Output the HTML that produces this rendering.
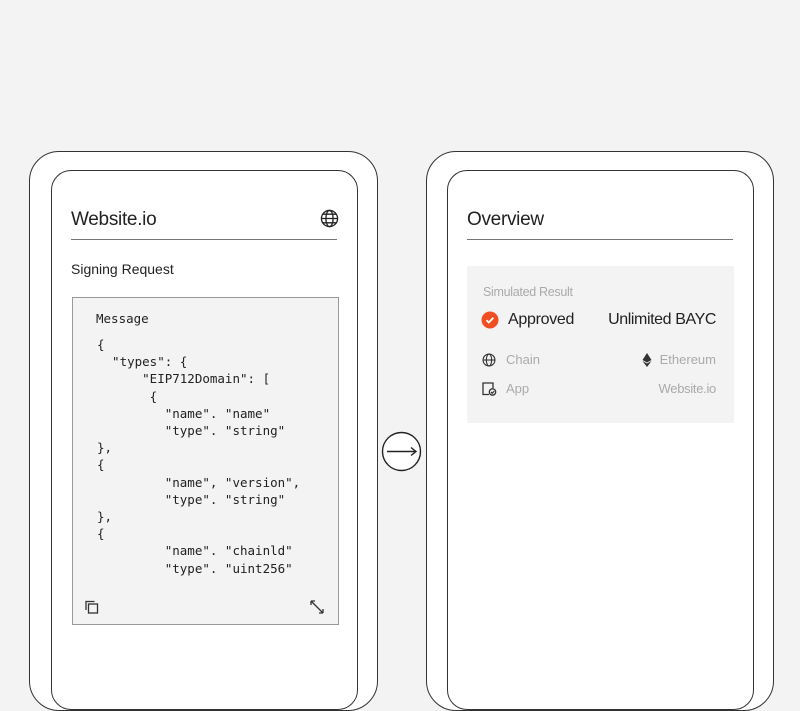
<!DOCTYPE html>
<html><head><style>
*{margin:0;padding:0;box-sizing:border-box}
body{width:800px;height:686px;background:#f3f3f3;position:relative;overflow:hidden;font-family:"Liberation Sans",sans-serif;color:#222}
.abs{position:absolute}
.outer{position:absolute;top:151px;height:560px;border:1.5px solid #333;border-radius:30px;background:#fff}
.inner{position:absolute;top:170px;height:540px;border:1.5px solid #333;border-radius:20px;background:#fff}
.mono{font-family:"DejaVu Sans Mono","Liberation Mono",monospace;font-size:12.5px;color:#222;white-space:pre;line-height:17.2px}
</style></head><body>
<div class="outer" style="left:29px;width:349px"></div>
<div class="inner" style="left:51px;width:307px"></div>
<div class="outer" style="left:426px;width:348px"></div>
<div class="inner" style="left:447px;width:307px"></div>

<div class="abs" style="left:71px;top:209px;font-size:19px;letter-spacing:-0.3px">Website.io</div>
<svg class="abs" style="left:320px;top:209px" width="19" height="19" viewBox="0 0 20 20" fill="none" stroke="#222" stroke-width="1.4"><circle cx="10" cy="10" r="8.5"/><ellipse cx="10" cy="10" rx="3.8" ry="8.5"/><path d="M1.5 10h17M3 5.5h14M3 14.5h14"/></svg>
<div class="abs" style="left:71px;top:239px;width:266px;height:1px;background:#777"></div>
<div class="abs" style="left:71px;top:261px;font-size:14px">Signing Request</div>

<div class="abs" style="left:72px;top:297px;width:267px;height:328px;background:#f3f3f3;border:1.5px solid #999"></div>
<div class="abs mono" style="left:96px;top:310px">Message</div>
<div class="abs mono" style="left:97px;top:336px">{
  "types": {
      "EIP712Domain": [
       {
         "name". "name"
         "type". "string"
},
{
         "name", "version",
         "type". "string"
},
{
         "name". "chainld"
         "type". "uint256"</div>
<svg class="abs" style="left:84px;top:599px" width="16" height="16" viewBox="0 0 16 16" fill="none" stroke="#333" stroke-width="1.3"><rect x="4.5" y="5" width="9" height="9"/><path d="M2 11V2.5h8.5"/></svg>
<svg class="abs" style="left:309px;top:599px" width="16" height="16" viewBox="0 0 16 16" fill="none" stroke="#333" stroke-width="1.3"><path d="M2 2l12 12M2 2h4M2 2v4M14 14h-4M14 14v-4"/></svg>

<svg class="abs" style="left:381px;top:431px" width="41" height="41" viewBox="0 0 41 41" fill="#fff" stroke="#222" stroke-width="1.4"><circle cx="20.5" cy="20.5" r="19"/><path d="M6 20.5h29M30 16.5l5 4-5 4" fill="none"/></svg>

<div class="abs" style="left:467px;top:209px;font-size:19px;letter-spacing:-0.3px">Overview</div>
<div class="abs" style="left:467px;top:239px;width:266px;height:1px;background:#777"></div>
<div class="abs" style="left:467px;top:266px;width:267px;height:157px;background:#f3f3f3"></div>
<div class="abs" style="left:483px;top:285px;font-size:12.5px;color:#aaa;letter-spacing:-0.3px">Simulated Result</div>
<svg class="abs" style="left:481px;top:311px" width="18" height="18" viewBox="0 0 18 18"><circle cx="9" cy="9" r="8.5" fill="#f04e23"/><path d="M5.5 9.2l2.3 2.3 4.5-4.8" fill="none" stroke="#fff" stroke-width="1.8"/></svg>
<div class="abs" style="left:508px;top:311px;font-size:16px;letter-spacing:-0.3px">Approved</div>
<div class="abs" style="right:84px;top:311px;font-size:16px;letter-spacing:-0.4px">Unlimited BAYC</div>
<svg class="abs" style="left:482px;top:353px" width="14" height="14" viewBox="0 0 20 20" fill="none" stroke="#333" stroke-width="1.6"><circle cx="10" cy="10" r="8.5"/><ellipse cx="10" cy="10" rx="3.8" ry="8.5"/><path d="M1.5 10h17"/></svg>
<div class="abs" style="left:506px;top:352px;font-size:13px;color:#aaa">Chain</div>
<svg class="abs" style="left:642px;top:353px" width="10" height="14" viewBox="0 0 10 14"><path d="M5 0L0.5 7 5 9.5 9.5 7z M0.5 8 5 14 9.5 8 5 10.5z" fill="#333"/></svg>
<div class="abs" style="right:84px;top:352px;font-size:13px;color:#aaa">Ethereum</div>
<svg class="abs" style="left:482px;top:382px" width="15" height="14" viewBox="0 0 15 14" fill="none" stroke="#333" stroke-width="1.3"><path d="M7 12.5H1V1h10v5"/><circle cx="10.5" cy="10" r="3.2"/><path d="M9 10l1.2 1.2 2-2"/></svg>
<div class="abs" style="left:506px;top:381px;font-size:13px;color:#aaa">App</div>
<div class="abs" style="right:84px;top:381px;font-size:13px;color:#aaa;letter-spacing:-0.3px">Website.io</div>
</body></html>
